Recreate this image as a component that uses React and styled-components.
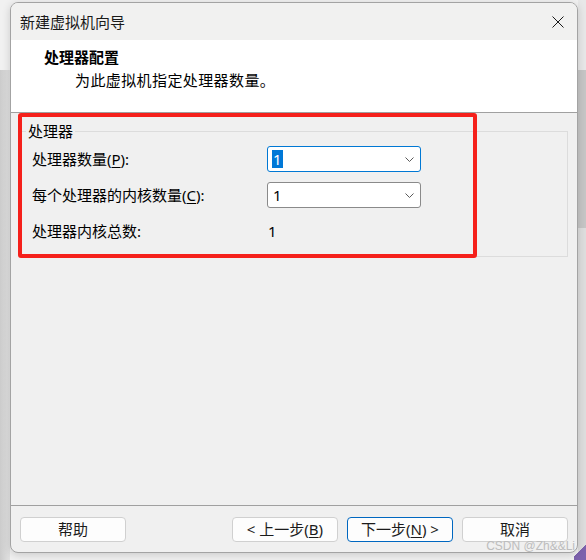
import styled, { createGlobalStyle } from "styled-components";

const GlobalStyle = createGlobalStyle`
  html, body {
    margin: 0;
    padding: 0;
  }
  body {
    width: 586px;
    height: 560px;
    overflow: hidden;
    font-family: "Noto Sans", "Noto Sans CJK SC", sans-serif;
  }
`;

// backdrop behind the dialog (other windows peeking out)
const Screen = styled.div`
  position: relative;
  width: 586px;
  height: 560px;
  overflow: hidden;
  box-sizing: border-box;
  padding: 2px 8px 0 10px;
  background:
    linear-gradient(135deg, transparent 55%, #7d62ad 55%) right bottom / 12px 22px no-repeat,
    linear-gradient(#e8e8e8 0 70px, #c6c6c6 70px 228px, #dedede 228px) right top / 8px 100% no-repeat,
    linear-gradient(to right, #cbcbcb, #e2e2e2) left 70px / 10px 100% no-repeat,
    #f1f1f1;
`;

const Dialog = styled.div`
  width: 568px;
  height: 551px;
  box-sizing: border-box;
  border: 1px solid #a3a3a3;
  border-radius: 8px;
  background: #f0f0f0;
  display: flex;
  flex-direction: column;
  overflow: hidden;
  box-shadow: 0 2px 8px rgba(0, 0, 0, 0.16);
  color: #000;
  font-size: 15px;
`;

const TitleBar = styled.div`
  height: 37px;
  flex: none;
  display: flex;
  align-items: center;
  justify-content: space-between;
  padding: 0 13px 0 9px;
  background: #f1f1f0;
  color: #1a1a1a;
  font-size: 15px;
`;

const CloseIcon = styled.svg`
  width: 12px;
  height: 12px;
  display: block;
`;

const Header = styled.div`
  height: 73px;
  flex: none;
  box-sizing: border-box;
  background: #fff;
  border-bottom: 1px solid #a0a0a0;
  padding: 7px 0 0 33px;
`;

const HeaderTitle = styled.div`
  font-weight: 700;
  line-height: 20px;
`;

const HeaderText = styled.div`
  margin: 3px 0 0 31px;
  line-height: 20px;
  letter-spacing: 0.4px;
`;

const Body = styled.div`
  flex: 1;
  padding: 8px 9px 0;
`;

const Group = styled.fieldset`
  margin: 0;
  padding: 5px 11px 12px;
  border: 1px solid #dcdcdc;
  min-width: 0;
`;

const Legend = styled.legend`
  margin-left: -6px;
  padding: 0 2px;
  line-height: 20px;
`;

const Grid = styled.div`
  display: grid;
  grid-template-columns: 235px 154px;
  grid-auto-rows: 26px;
  row-gap: 10px;
  align-items: center;
`;

const Label = styled.div`
  line-height: 20px;
`;

const Key = styled.span`
  text-decoration: underline;
  text-underline-offset: 2px;
`;

const Combo = styled.div`
  height: 26px;
  box-sizing: border-box;
  border: 1px solid ${({ $focused }) => ($focused ? "#0078d4" : "#8a8a8a")};
  border-radius: 3px;
  background: #fff;
  display: flex;
  align-items: center;
  justify-content: space-between;
  padding: 0 6px 0 4px;
`;

const ComboValue = styled.span`
  display: inline-block;
  height: 18px;
  line-height: 18px;
  padding: 0 1px;
  background: ${({ $selected }) => ($selected ? "#0078d7" : "transparent")};
  color: ${({ $selected }) => ($selected ? "#fff" : "#000")};
`;

const Chevron = styled.svg`
  width: 9px;
  height: 5px;
  display: block;
`;

const Value = styled.div`
  padding-left: 1px;
  line-height: 20px;
`;

const Footer = styled.div`
  height: 47px;
  flex: none;
  box-sizing: border-box;
  border-top: 1px solid #a0a0a0;
  display: flex;
  align-items: flex-start;
  padding: 11px 9px 0;
  gap: 9px;
`;

const Spacer = styled.div`
  flex: 1;
`;

const Button = styled.button`
  width: 106px;
  height: 25px;
  box-sizing: border-box;
  border: 1px solid ${({ $primary }) => ($primary ? "#0067c0" : "#d0d0d0")};
  border-radius: 4px;
  background: #fdfdfd;
  font-family: inherit;
  font-size: 15px;
  line-height: 21px;
  color: #1b1b1b;
  padding: 0;
`;

// annotation overlay drawn on the screenshot
const Highlight = styled.div`
  position: absolute;
  left: 18px;
  top: 113px;
  width: 459px;
  height: 145px;
  box-sizing: border-box;
  border: 4px solid #f5201b;
  border-radius: 3px;
  pointer-events: none;
`;

const Watermark = styled.div`
  position: absolute;
  right: 11px;
  top: 539px;
  font-size: 12px;
  line-height: 14px;
  color: #bdbdbd;
  font-family: "Liberation Sans", sans-serif;
`;

const ComboBox = ({ value, focused }) => (
  <Combo $focused={focused}>
    <ComboValue $selected={focused}>{value}</ComboValue>
    <Chevron viewBox="0 0 9 5">
      <polyline points="0.5,0.5 4.5,4.5 8.5,0.5" fill="none" stroke="#5a5a5a" strokeWidth="1" />
    </Chevron>
  </Combo>
);

export default function App() {
  return (
    <Screen>
      <GlobalStyle />
      <Dialog>
        <TitleBar>
          <span>新建虚拟机向导</span>
          <CloseIcon viewBox="0 0 12 12">
            <path d="M0.5 0.5 L11.5 11.5 M11.5 0.5 L0.5 11.5" stroke="#1a1a1a" strokeWidth="1" />
          </CloseIcon>
        </TitleBar>
        <Header>
          <HeaderTitle>处理器配置</HeaderTitle>
          <HeaderText>为此虚拟机指定处理器数量。</HeaderText>
        </Header>
        <Body>
          <Group>
            <Legend>处理器</Legend>
            <Grid>
              <Label>
                处理器数量(<Key>P</Key>):
              </Label>
              <ComboBox value="1" focused />
              <Label>
                每个处理器的内核数量(<Key>C</Key>):
              </Label>
              <ComboBox value="1" />
              <Label>处理器内核总数:</Label>
              <Value>1</Value>
            </Grid>
          </Group>
        </Body>
        <Footer>
          <Button>帮助</Button>
          <Spacer />
          <Button>
            &lt; 上一步(<Key>B</Key>)
          </Button>
          <Button $primary>
            下一步(<Key>N</Key>) &gt;
          </Button>
          <Button>取消</Button>
        </Footer>
      </Dialog>
      <Highlight />
      <Watermark>CSDN @Zh&amp;&amp;Li</Watermark>
    </Screen>
  );
}
